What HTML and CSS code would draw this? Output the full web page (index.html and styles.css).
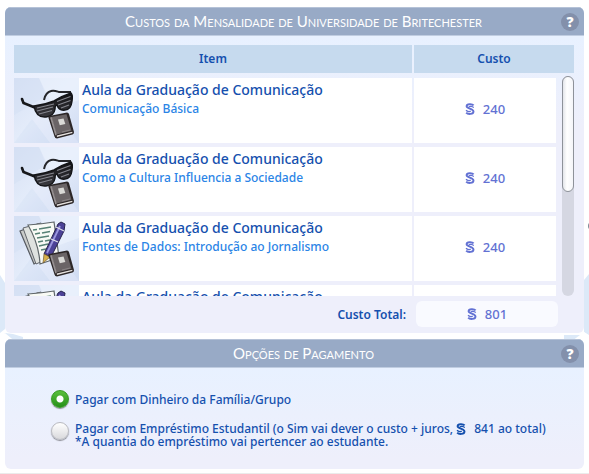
FILE: index.html
```html
<!DOCTYPE html>
<html lang="pt-BR">

<head>
    <meta charset="UTF-8">
    <meta name="viewport" content="width=device-width, initial-scale=1.0">
    <title>Custos da Mensalidade</title>
    <link rel="stylesheet" href="styles.css">
</head>

<body>

    <!-- shared icons -->
    <svg class="sprites" aria-hidden="true">
        <defs>
            <linearGradient id="tile" x1="0" y1="0" x2="1" y2="1">
                <stop offset="0" stop-color="#d6e0f4" />
                <stop offset="0.5" stop-color="#e4ecfa" />
                <stop offset="1" stop-color="#cfdbf2" />
            </linearGradient>
            <linearGradient id="lens" x1="0" y1="0" x2="0" y2="1">
                <stop offset="0" stop-color="#111114" />
                <stop offset="1" stop-color="#3b3b40" />
            </linearGradient>
        </defs>

        <symbol id="simoleon" viewBox="0 0 10 12">
            <path d="M8.6 2.4C7.4 .9 1.6 .5 1.6 3.3c0 2.4 6.9 2.2 6.9 5.1 0 3.100-5.700 3.200-7.300 1.300" fill="none" stroke="currentColor" stroke-width="1.900" />
            <path d="M8.700 4.600C7.600 3.100 4 3 4.100 4.300M1 7.200c1.400 1.500 4.500 2 4.600 .5" fill="none" stroke="currentColor" stroke-width="1.300" />
        </symbol>

        <symbol id="backdrop" viewBox="0 0 65 65">
            <rect width="65" height="65" fill="url(#tile)" />
            <path d="M0 0h25l7 18L0 37z" fill="#d3dff4" opacity="0.5" />
            <path d="M25 0h40v22L40 31z" fill="#edf3fd" opacity="0.6" />
            <path d="M0 65l18-24 18 24z" fill="#ccd9f1" opacity="0.3" />
            <path d="M18 41l22-10 25 34H36z" fill="#e5ecfa" opacity="0.4" />
        </symbol>

        <symbol id="book" viewBox="0 0 65 65">
            <path d="M35 38l18-3.500q1.500 0 2 1.500l5 18q0 2-1.500 2.500L43 60.500q-2 0-2.500-2L34.500 40q-.5-1.500.5-2z" fill="#2c2728" />
            <path d="M43 59l15.500-4-.3-1.300-15.500 3.800z" fill="#e6e2df" />
            <path d="M37.500 39l15-2.800 5 16.500-15 3.800z" fill="#6a6466" />
            <path d="M36 39.500l1.800-.5 5 17.500-1.500 1z" fill="#958f90" />
            <path d="M44 41.500l5.500-1 1.800 5.500-5.500 1.200z" fill="#d9d9d6" />
            <path d="M48 54l8-2" stroke="#8b8586" stroke-width="1" />
        </symbol>

        <symbol id="glasses" viewBox="0 0 65 65">
            <use href="#backdrop" />
            <path d="M30 22c1-5 3-8 7-9 3-1 5 0 8 1l12 0" fill="none" stroke="#25262a" stroke-width="2" />
            <path d="M8 21l1.500 4L22 30" fill="none" stroke="#17181b" stroke-width="2.600" stroke-linecap="round" />
            <path d="M20 28q10-1 20-5 8-5 17-8 2 2 1 8-1 9-7 9-6 1-8-5-2 0-2 4-1 7-9 8-10 1-12-11z" fill="url(#lens)" stroke="#141518" stroke-width="1.500" />
            <path d="M23 30l17-4M23 33l16-4M25 36l13-3.500M43 23.500l13.500-5M44 27l12.500-4.500M47 30l8-3" stroke="#85868e" stroke-width="1.100" />
            <use href="#book" />
        </symbol>

        <symbol id="notes" viewBox="0 0 65 65">
            <use href="#backdrop" />
            <path d="M6 15l18-7 11 33-15 7z" fill="#c9cbc9" stroke="#555960" stroke-width="1.200" />
            <path d="M9 12l18-5 9 35-14 6z" fill="#dfe2df" stroke="#61656b" stroke-width="1" />
            <path d="M14 9q14-1 26-3l5 35q-9 4-19 7-1-20-12-39z" fill="#f8faf5" stroke="#60676a" stroke-width="1.200" />
            <path d="M19 14l4-.5M25 13l12-2M21 18l5-1M28 17l8-1.500M23 22l12-2M24 26l5-1M31 25l5-1M25 30l9-2M27 34l5-1" stroke="#578275" stroke-width="1.600" />
            <path d="M44 8l3-2 4 2-1 7-13 26-7-3z" fill="#4c4297" stroke="#28254e" stroke-width="1" />
            <path d="M46 10L33 37" stroke="#9b97de" stroke-width="1.800" />
            <path d="M42 11l8 4M37 23l7 3" stroke="#e1e0eb" stroke-width="1.300" />
            <path d="M30 38l6 3-7 6z" fill="#d7b14c" stroke="#735c32" stroke-width=".7" />
            <use href="#book" />
        </symbol>
    </svg>

    <svg class="deco deco-left" viewBox="0 0 24 72" aria-hidden="true">
        <path d="M0 3l5 8v46l-5 4z" fill="#dce9f8" />
        <path d="M5 61l8 1 10 3v4H0z" fill="#dce9f8" />
        <path d="M0 65l5-4 13 11H0z" fill="#fff" />
    </svg>
    <svg class="deco deco-right" viewBox="0 0 26 72" aria-hidden="true">
        <path d="M26 2l-5 6v52l5 4z" fill="#dce9f8" />
        <path d="M1 63h20v3L1 69z" fill="#dce9f8" />
        <path d="M26 63l-5-3-16 12h21z" fill="#fff" />
    </svg>
    <span class="edge-dot"></span>

    <main class="dialog">

        <section class="panel costs">
            <header class="panel-header">
                <h2>Custos da Mensalidade de Universidade de Britechester</h2>
                <button type="button" class="help" aria-label="Ajuda">?</button>
            </header>

            <div class="cost-list">
                <table>
                    <thead>
                        <tr>
                            <th>Item</th>
                            <th>Custo</th>
                        </tr>
                    </thead>
                    <tbody>
                        <tr>
                            <td class="item">
                                <svg class="thumb"><use href="#glasses" /></svg>
                                <div class="item-text">
                                    <strong>Aula da Graduação de Comunicação</strong>
                                    <span>Comunicação Básica</span>
                                </div>
                            </td>
                            <td class="price"><svg class="coin"><use href="#simoleon" /></svg>240</td>
                        </tr>
                        <tr>
                            <td class="item">
                                <svg class="thumb"><use href="#glasses" /></svg>
                                <div class="item-text">
                                    <strong>Aula da Graduação de Comunicação</strong>
                                    <span>Como a Cultura Influencia a Sociedade</span>
                                </div>
                            </td>
                            <td class="price"><svg class="coin"><use href="#simoleon" /></svg>240</td>
                        </tr>
                        <tr>
                            <td class="item">
                                <svg class="thumb"><use href="#notes" /></svg>
                                <div class="item-text">
                                    <strong>Aula da Graduação de Comunicação</strong>
                                    <span>Fontes de Dados: Introdução ao Jornalismo</span>
                                </div>
                            </td>
                            <td class="price"><svg class="coin"><use href="#simoleon" /></svg>240</td>
                        </tr>
                        <tr>
                            <td class="item">
                                <svg class="thumb"><use href="#notes" /></svg>
                                <div class="item-text">
                                    <strong>Aula da Graduação de Comunicação</strong>
                                </div>
                            </td>
                            <td class="price"></td>
                        </tr>
                    </tbody>
                </table>
                <div class="scrollbar"><div class="scroll-thumb"></div></div>
            </div>

            <div class="total">
                <span class="total-label">Custo Total:</span>
                <span class="total-value price"><svg class="coin"><use href="#simoleon" /></svg>801</span>
            </div>
        </section>

        <section class="panel payment">
            <header class="panel-header">
                <h2>Opções de Pagamento</h2>
                <button type="button" class="help" aria-label="Ajuda">?</button>
            </header>

            <form class="options">
                <label class="option">
                    <input type="radio" name="payment" value="cash" checked>
                    <span>Pagar com Dinheiro da Família/Grupo</span>
                </label>
                <label class="option option-loan">
                    <input type="radio" name="payment" value="loan">
                    <span>Pagar com Empréstimo Estudantil (o Sim vai dever o custo + juros, <svg class="coin"><use href="#simoleon" /></svg>841 ao total)<br>*A quantia do empréstimo vai pertencer ao estudante.</span>
                </label>
            </form>
        </section>

    </main>

    <div class="bottom-edge"></div>

</body>

</html>
```

FILE: styles.css
```css
* {
    box-sizing: border-box;
}

body {
    margin: 0;
    min-height: 100vh;
    display: flex;
    flex-direction: column;
    overflow: hidden;
    background: #fff;
    color: #1550ae;
    font-family: "Noto Sans", sans-serif;
    font-size: 12px;
    font-weight: 500;
}

.sprites {
    position: absolute;
    width: 0;
    height: 0;
}

.deco {
    position: absolute;
    top: 272px;
    height: 72px;
}

.deco-left {
    left: 0;
    width: 24px;
}

.deco-right {
    right: 0;
    width: 26px;
}

.edge-dot {
    position: absolute;
    top: 222px;
    right: -7px;
    width: 8px;
    height: 8px;
    border-radius: 50%;
    background: #7d8995;
}

.dialog {
    position: relative;
    display: flex;
    flex-direction: column;
    gap: 6px;
    padding: 7px 5px 4px;
}

.panel {
    border-radius: 6px;
    overflow: hidden;
    background: linear-gradient(#e8f1ff 30px, #eeeffb 120px);
}

.panel-header {
    display: grid;
    grid-template-columns: 1fr 18px;
    align-items: center;
    height: 29px;
    padding: 0 5px 0 41px;
    background: #98aac6;
    border-top: 1px solid #b5c2d7;
    border-bottom: 1px solid #c0cde1;
}

.panel-header h2 {
    margin: 0;
    color: #fff;
    font-family: Lato, sans-serif;
    font-size: 15px;
    font-weight: 400;
    font-variant: small-caps;
    line-height: 16px;
    padding-bottom: 2px;
    text-align: center;
}

.help {
    width: 18px;
    height: 18px;
    padding: 0;
    border: none;
    border-radius: 50%;
    background: #8390ab;
    color: #fff;
    font-family: "Open Sans", sans-serif;
    font-size: 14px;
    font-weight: 800;
    line-height: 18px;
    cursor: pointer;
}

/* cost table */

.cost-list {
    display: grid;
    padding: 9px 10px 0 9px;
}

.cost-list table {
    grid-area: 1 / 1;
    display: block;
}

thead,
tbody {
    display: block;
}

thead tr {
    display: grid;
    grid-template-columns: 1fr 160px;
    gap: 2px;
}

th {
    height: 28px;
    padding: 0;
    background: #c6daee;
    font-weight: 600;
    line-height: 28px;
}

tbody {
    height: 218px;
    margin-top: 5px;
    padding-right: 18px;
    overflow: hidden;
}

tbody tr {
    display: grid;
    grid-template-columns: 1fr 142px;
    gap: 2px;
    height: 65px;
    margin-bottom: 4px;
}

td {
    padding: 0;
    background: #fff;
}

.item {
    display: flex;
    gap: 3px;
}

.thumb {
    width: 65px;
    height: 65px;
}

.item-text {
    display: flex;
    flex-direction: column;
    padding-top: 2px;
}

.item-text strong {
    font-size: 14px;
    font-weight: 500;
    line-height: 20px;
}

.item-text span {
    color: #2a84e6;
    line-height: 18px;
}

.price {
    display: flex;
    align-items: center;
    justify-content: center;
    color: #6271d3;
    font-size: 13px;
    font-weight: 500;
}

td.price {
    padding-bottom: 3px;
}

.coin {
    width: 10px;
    height: 12px;
    margin-right: 8px;
}

.scrollbar {
    grid-area: 1 / 1;
    justify-self: end;
    align-self: end;
    width: 12px;
    height: 220px;
    border-radius: 6px;
    background: #d5d7e2;
}

.scroll-thumb {
    height: 116px;
    border: 1px solid #8e929a;
    border-radius: 6px;
    background: linear-gradient(90deg, #e3e5ea, #fff 40%, #f4f5f9);
}

.total {
    display: flex;
    align-items: center;
    justify-content: flex-end;
    gap: 10px;
    padding: 5px 26px 6px 9px;
}

.total-label {
    font-weight: 600;
}

.total-value {
    width: 142px;
    height: 26px;
    border-radius: 6px;
    background: #f9faff;
}

/* payment options */

.options {
    display: flex;
    flex-direction: column;
    gap: 14px;
    padding: 22px 10px 21px 46px;
}

.option {
    display: flex;
    align-items: center;
    gap: 6px;
    line-height: 13px;
}

.option-loan {
    align-items: flex-start;
}

.option input {
    appearance: none;
    flex: none;
    width: 18px;
    height: 18px;
    margin: 0;
    border: 1px solid #b9bac0;
    border-radius: 50%;
    background: linear-gradient(#fff, #d9d9dc);
    box-shadow: 0 1px 1px #8b8d94;
}

.option input:checked {
    border-color: #379a25;
    background: radial-gradient(circle, #fff 3px, transparent 4px), linear-gradient(#5abf3c, #259019);
}

.option .coin {
    vertical-align: -2px;
}

.bottom-edge {
    flex: 1;
    background: linear-gradient(#fafafa, #dcdcdc);
}
```
